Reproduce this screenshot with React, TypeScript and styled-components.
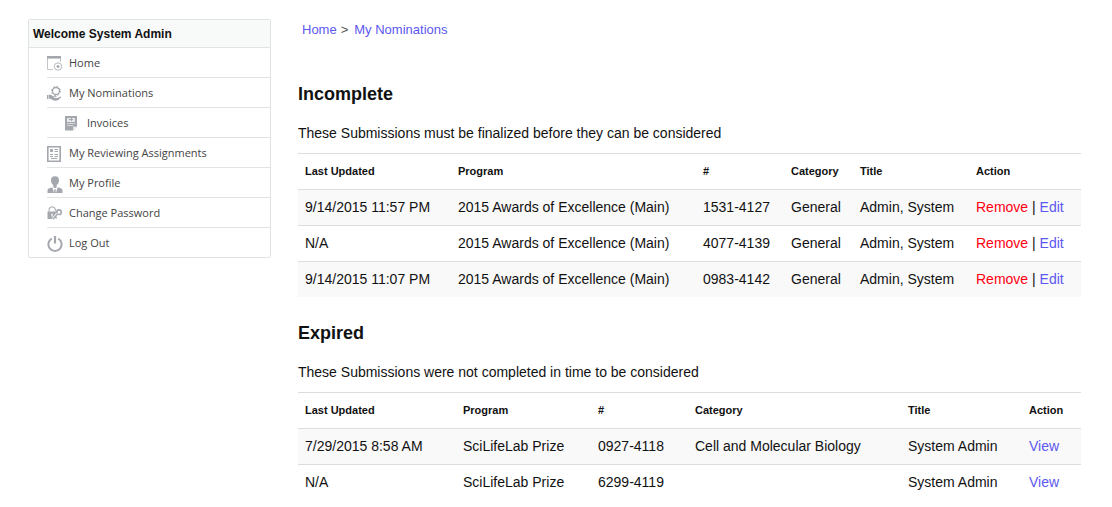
import React from "react";
import styled, { createGlobalStyle } from "styled-components";

const GlobalStyle = createGlobalStyle`
  * { box-sizing: border-box; }
  body {
    margin: 0;
    background: #fff;
    color: #111;
    font-family: "Liberation Sans", Arial, sans-serif;
    font-size: 14px;
    line-height: 20px;
  }
`;

const Page = styled.div`
  display: flex;
  align-items: flex-start;
  gap: 27px;
  padding: 19px 31px 7px 28px;
`;

const Sidebar = styled.nav`
  flex: 0 0 243px;
  border: 1px solid #e2e4e4;
  border-radius: 2px;
`;

const Welcome = styled.h2`
  margin: 0;
  padding: 5px 4px 3px;
  background: #f8faf9;
  border-bottom: 1px solid #e2e4e4;
  font-size: 12px;
  font-weight: bold;
  line-height: 19px;
`;

const Menu = styled.ul`
  margin: 0;
  padding: 0 0 0 18px;
  list-style: none;
`;

const MenuItem = styled.li<{ $nested?: boolean }>`
  padding-left: ${(p) => (p.$nested ? 18 : 0)}px;
  border-bottom: 1px solid #e2e4e4;
  &:last-child { border-bottom: 0; }
`;

const MenuLink = styled.a`
  display: flex;
  align-items: center;
  gap: 6px;
  height: 29px;
  color: #444;
  font-family: "Open Sans", sans-serif;
  font-size: 11px;
  text-decoration: none;
  svg { flex: none; margin-top: 4px; }
`;

const Main = styled.main`
  flex: 1;
  min-width: 0;
`;

const Breadcrumb = styled.nav`
  display: flex;
  gap: 4px;
  padding: 1px 4px 0;
  margin-bottom: 42px;
  color: #555;
  font-size: 13px;
`;

const Separator = styled.span`
  padding-right: 2px;
`;

const Link = styled.a<{ $danger?: boolean }>`
  color: ${(p) => (p.$danger ? "#ff0010" : "#5c58f0")};
  text-decoration: none;
`;

const Section = styled.section`
  margin-bottom: 24px;
  &:last-child { margin-bottom: 0; }
`;

const Heading = styled.h3`
  margin: 0 0 17px;
  font-size: 18px;
  line-height: 24px;
`;

const Note = styled.p`
  margin: 0 0 10px;
`;

const Table = styled.table`
  width: 100%;
  table-layout: fixed;
  border-spacing: 0;
`;

const Column = styled.col<{ $width: number }>`
  width: ${(p) => p.$width}px;
`;

const HeaderCell = styled.th`
  padding: 7px;
  border-top: 1px solid #ddd;
  font-size: 11px;
  line-height: 21px;
  text-align: left;
`;

const Row = styled.tr`
  &:nth-child(odd) { background: #f9f9f9; }
`;

const Cell = styled.td`
  padding: 7px;
  border-top: 1px solid #ddd;
  line-height: 21px;
  white-space: nowrap;
`;

const Icon = ({ children }: { children: React.ReactNode }) => (
  <svg width="16" height="17" viewBox="0 0 16 17" fill="none" stroke="#a4a8ae" aria-hidden="true">
    {children}
  </svg>
);

const HomeIcon = () => (
  <Icon>
    <path d="M.5 2v11.5H6M13.5 2v4" stroke="#c3c6ca" />
    <path d="M0 1.300h14" strokeWidth="2.600" />
    <circle cx="11" cy="10.500" r="3.700" stroke="#b4b7bc" />
    <path d="M9.500 10.500h3M11 9v3" strokeWidth="1.400" />
  </Icon>
);

const NominationsIcon = () => (
  <Icon>
    <circle cx="9" cy="5" r="3.500" strokeWidth="1.300" />
    <circle cx="9" cy="5" r="4.500" strokeDasharray="1.700 1.834" strokeWidth="1" />
    <path d="M0 9h1v4H0zM1.500 8.800C3.500 8.300 5 9 6 10.300h3.500v1H6.500l.5.700h3.500l3-1.500c.6 0 .8.600.4 1L11 14.300c-2 .6-4 .5-5.500-.3l-2-1.200h-2z" fill="#a4a8ae" stroke="none" />
  </Icon>
);

const InvoiceIcon = () => (
  <Icon>
    <path d="M0 0h12v10.500L8 14.500H0z" fill="#a4a8ae" stroke="none" />
    <path d="M2 2h8v4H2z" fill="#e6e7e9" stroke="none" />
    <path d="M4 3.500h4M6.500 2v3" />
    <path d="M2 7.500h8M2 9.500h6" stroke="#d3d5d8" />
    <path d="M8 14.500v-4h4z" fill="#e6e7e9" stroke="none" />
  </Icon>
);

const ReviewIcon = () => (
  <Icon>
    <path d="M.8.8h12.400v14.400H.8z" strokeWidth="1.600" />
    <path d="M3.500 3.500h2v2h-2zM4 12.500h6" fill="#a4a8ae" />
    <path d="M7.500 3.500H11M7.500 5.500H11M3 8.500h3M7.500 8.500H11M3 10.500h3M7.500 10.500H11" />
  </Icon>
);

const ProfileIcon = () => (
  <Icon>
    <path d="M8 .3c3 0 4.200 2 4 4.500C11.900 7.300 10.500 9.500 8 9.500S4.100 7.300 4 4.800C3.800 2.300 5 .3 8 .3z" fill="#a4a8ae" stroke="none" />
    <path d="M6.300 8h3.400v3.200L8 12.200l-1.700-1z" fill="#a4a8ae" stroke="none" />
    <path d="M.5 17v-2.800c0-1.500 2-2.400 5-2.700L7 17zM15.500 17v-2.800c0-1.500-2-2.400-5-2.700L9 17z" fill="#a4a8ae" stroke="none" />
    <path d="M8 13l1 1-.4 1L9 17H7l.4-2-.4-1z" fill="#a4a8ae" stroke="none" />
  </Icon>
);

const PasswordIcon = () => (
  <Icon>
    <path d="M2 5.500V4a3.200 3.200 0 0 1 6.400 0v1" stroke="#b8bbc0" strokeWidth="1.300" />
    <path d="M.5 5.500h9l-1.500 4-2.500 3.500h-5z" fill="#a4a8ae" stroke="none" />
    <path d="M5 7.500v3" stroke="#fff" strokeWidth="1.200" />
    <circle cx="12" cy="6.200" r="2.300" strokeWidth="1.600" />
    <path d="M10.500 8L6 13.300M8.200 10.800l1.500 1.400" stroke="#fff" strokeWidth="3" />
    <path d="M10.500 8L6 13.300M8.200 10.800l1.500 1.400" strokeWidth="1.500" />
  </Icon>
);

const PowerIcon = () => (
  <Icon>
    <path d="M4.800 2.600A6.600 6.600 0 1 0 11.200 2.600" strokeWidth="2" />
    <path d="M8 0v7.500" strokeWidth="2.200" />
  </Icon>
);

const menuItems = [
  { label: "Home", icon: <HomeIcon /> },
  { label: "My Nominations", icon: <NominationsIcon /> },
  { label: "Invoices", icon: <InvoiceIcon />, nested: true },
  { label: "My Reviewing Assignments", icon: <ReviewIcon /> },
  { label: "My Profile", icon: <ProfileIcon /> },
  { label: "Change Password", icon: <PasswordIcon /> },
  { label: "Log Out", icon: <PowerIcon /> },
];

const headers = ["Last Updated", "Program", "#", "Category", "Title", "Action"];

const incomplete = [
  ["9/14/2015 11:57 PM", "2015 Awards of Excellence (Main)", "1531-4127", "General", "Admin, System"],
  ["N/A", "2015 Awards of Excellence (Main)", "4077-4139", "General", "Admin, System"],
  ["9/14/2015 11:07 PM", "2015 Awards of Excellence (Main)", "0983-4142", "General", "Admin, System"],
];

const expired = [
  ["7/29/2015 8:58 AM", "SciLifeLab Prize", "0927-4118", "Cell and Molecular Biology", "System Admin"],
  ["N/A", "SciLifeLab Prize", "6299-4119", "", "System Admin"],
];

interface SubmissionsProps {
  title: string;
  note: string;
  widths: number[];
  rows: string[][];
  actions: React.ReactNode;
}

const Submissions = ({ title, note, widths, rows, actions }: SubmissionsProps) => (
  <Section>
    <Heading>{title}</Heading>
    <Note>{note}</Note>
    <Table>
      <colgroup>
        {widths.map((w, i) => <Column key={i} $width={w} />)}
      </colgroup>
      <thead>
        <tr>
          {headers.map((h) => <HeaderCell key={h} scope="col">{h}</HeaderCell>)}
        </tr>
      </thead>
      <tbody>
        {rows.map((row) => (
          <Row key={row[2]}>
            {row.map((value, i) => <Cell key={i}>{value}</Cell>)}
            <Cell>{actions}</Cell>
          </Row>
        ))}
      </tbody>
    </Table>
  </Section>
);

export default function App() {
  return (
    <>
      <GlobalStyle />
      <Page>
        <Sidebar aria-label="Account">
          <Welcome>Welcome System Admin</Welcome>
          <Menu>
            {menuItems.map((item) => (
              <MenuItem key={item.label} $nested={item.nested}>
                <MenuLink href="#">{item.icon}{item.label}</MenuLink>
              </MenuItem>
            ))}
          </Menu>
        </Sidebar>
        <Main>
          <Breadcrumb aria-label="Breadcrumb">
            <Link href="#">Home</Link>
            <Separator>&gt;</Separator>
            <Link href="#">My Nominations</Link>
          </Breadcrumb>
          <Submissions
            title="Incomplete"
            note="These Submissions must be finalized before they can be considered"
            widths={[153, 245, 88, 69, 116, 112]}
            rows={incomplete}
            actions={<><Link href="#" $danger>Remove</Link> | <Link href="#">Edit</Link></>}
          />
          <Submissions
            title="Expired"
            note="These Submissions were not completed in time to be considered"
            widths={[158, 135, 97, 213, 121, 59]}
            rows={expired}
            actions={<Link href="#">View</Link>}
          />
        </Main>
      </Page>
    </>
  );
}
